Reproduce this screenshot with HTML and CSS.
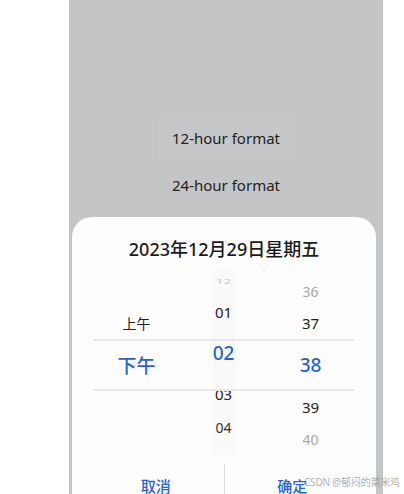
FILE: index.html
```html
<!DOCTYPE html>
<html lang="zh">
<head>
    <meta charset="UTF-8">
    <meta name="viewport" content="width=device-width, initial-scale=1.0">
    <title>Time Picker</title>
    <link rel="stylesheet" href="styles.css">
</head>
<body>
    <div class="screen">
        <div class="panel">
            <div class="options">
                <div class="option active">12-hour format</div>
                <div class="option">24-hour format</div>
            </div>
            <div class="sheet">
                <h2 class="sheet-title">2023年12月29日星期五</h2>
                <div class="picker">
                    <div class="band"></div>
                    <div class="column ampm">
                        <div class="item near">上午</div>
                        <div class="item selected">下午</div>
                    </div>
                    <div class="column hours">
                        <div class="item edge cut">12</div>
                        <div class="item near">01</div>
                        <div class="item selected">02</div>
                        <div class="item near">03</div>
                        <div class="item far">04</div>
                    </div>
                    <div class="column minutes">
                        <div class="item edge">36</div>
                        <div class="item near">37</div>
                        <div class="item selected">38</div>
                        <div class="item near">39</div>
                        <div class="item edge">40</div>
                    </div>
                </div>
                <div class="actions">
                    <button class="action">取消</button>
                    <div class="action-divider"></div>
                    <button class="action">确定</button>
                </div>
            </div>
        </div>
    </div>
    <div class="watermark">CSDN @郁闷的菜米鸡</div>
</body>
</html>
```

FILE: styles.css
```css
* {
    margin: 0;
    padding: 0;
    box-sizing: border-box;
    font-family: "Noto Sans", "Noto Sans CJK SC", sans-serif;
}

body {
    position: relative;
    width: 404px;
    height: 494px;
    overflow: hidden;
    background: #ffffff;
}

.screen {
    display: flex;
    height: 494px;
    padding-left: 69px;
}

.panel {
    width: 314px;
    height: 494px;
    overflow: hidden;
    background: #c4c5c7;
}

.options {
    display: flex;
    flex-direction: column;
    align-items: center;
    padding-top: 118px;
}

.option {
    height: 45px;
    line-height: 45px;
    padding: 0 14px;
    font-size: 15px;
    color: #222;
}

.option.active {
    height: 40px;
    line-height: 40px;
    margin-bottom: 5px;
    background: #c6c7c9;
}

.sheet {
    width: 304px;
    margin: 9px 0 0 3px;
    padding-top: 20px;
    height: 300px;
    background: #fdfdfd;
    border-radius: 20px 20px 0 0;
}

.sheet-title {
    height: 24px;
    line-height: 24px;
    font-size: 18px;
    font-weight: 500;
    text-align: center;
    color: #1c1c1c;
}

.picker {
    position: relative;
    display: grid;
    grid-template-columns: repeat(3, 1fr);
    height: 187px;
    margin: 7px 22px 0 21px;
    overflow: hidden;
}

.band {
    position: absolute;
    left: 0;
    right: 0;
    top: 71px;
    height: 52px;
    border-top: 2px solid #e8e8e8;
    border-bottom: 2px solid #e8e8e8;
}

.column {
    display: flex;
    flex-direction: column;
    align-items: center;
}

.ampm { padding-top: 37px; }
.minutes { padding-top: 9px; }

.hours {
    width: 22px;
    justify-self: center;
    background: #fafafa;
}

.item {
    display: flex;
    align-items: center;
    justify-content: center;
    height: 36px;
    font-size: 15px;
    color: #222;
}

.item.edge {
    height: 28px;
    font-size: 14px;
    color: #a8a8a8;
}

.item.cut {
    height: 26px;
    color: #cccccc;
    transform: scaleY(0.55);
}

.item.far {
    height: 30px;
    font-size: 14px;
    color: #333;
}

.item.selected {
    height: 48px;
    font-size: 19px;
    font-weight: 500;
    color: #2563d9;
}

.hours .item.selected { height: 46px; }

.ampm .item.near { font-size: 14px; }

.actions {
    display: grid;
    grid-template-columns: 1fr 1px 1fr;
    align-items: start;
    height: 46px;
    margin: 7px 16px 0;
}

.action {
    height: 46px;
    border: none;
    background: none;
    font-size: 15px;
    font-weight: 500;
    color: #2563d9;
}

.action-divider {
    height: 48px;
    margin-top: 2px;
    background: #dcdcdc;
}

.watermark {
    position: absolute;
    left: 304px;
    top: 474px;
    font-size: 10px;
    letter-spacing: -0.2px;
    color: rgba(150, 150, 150, 0.75);
    white-space: nowrap;
}
```
